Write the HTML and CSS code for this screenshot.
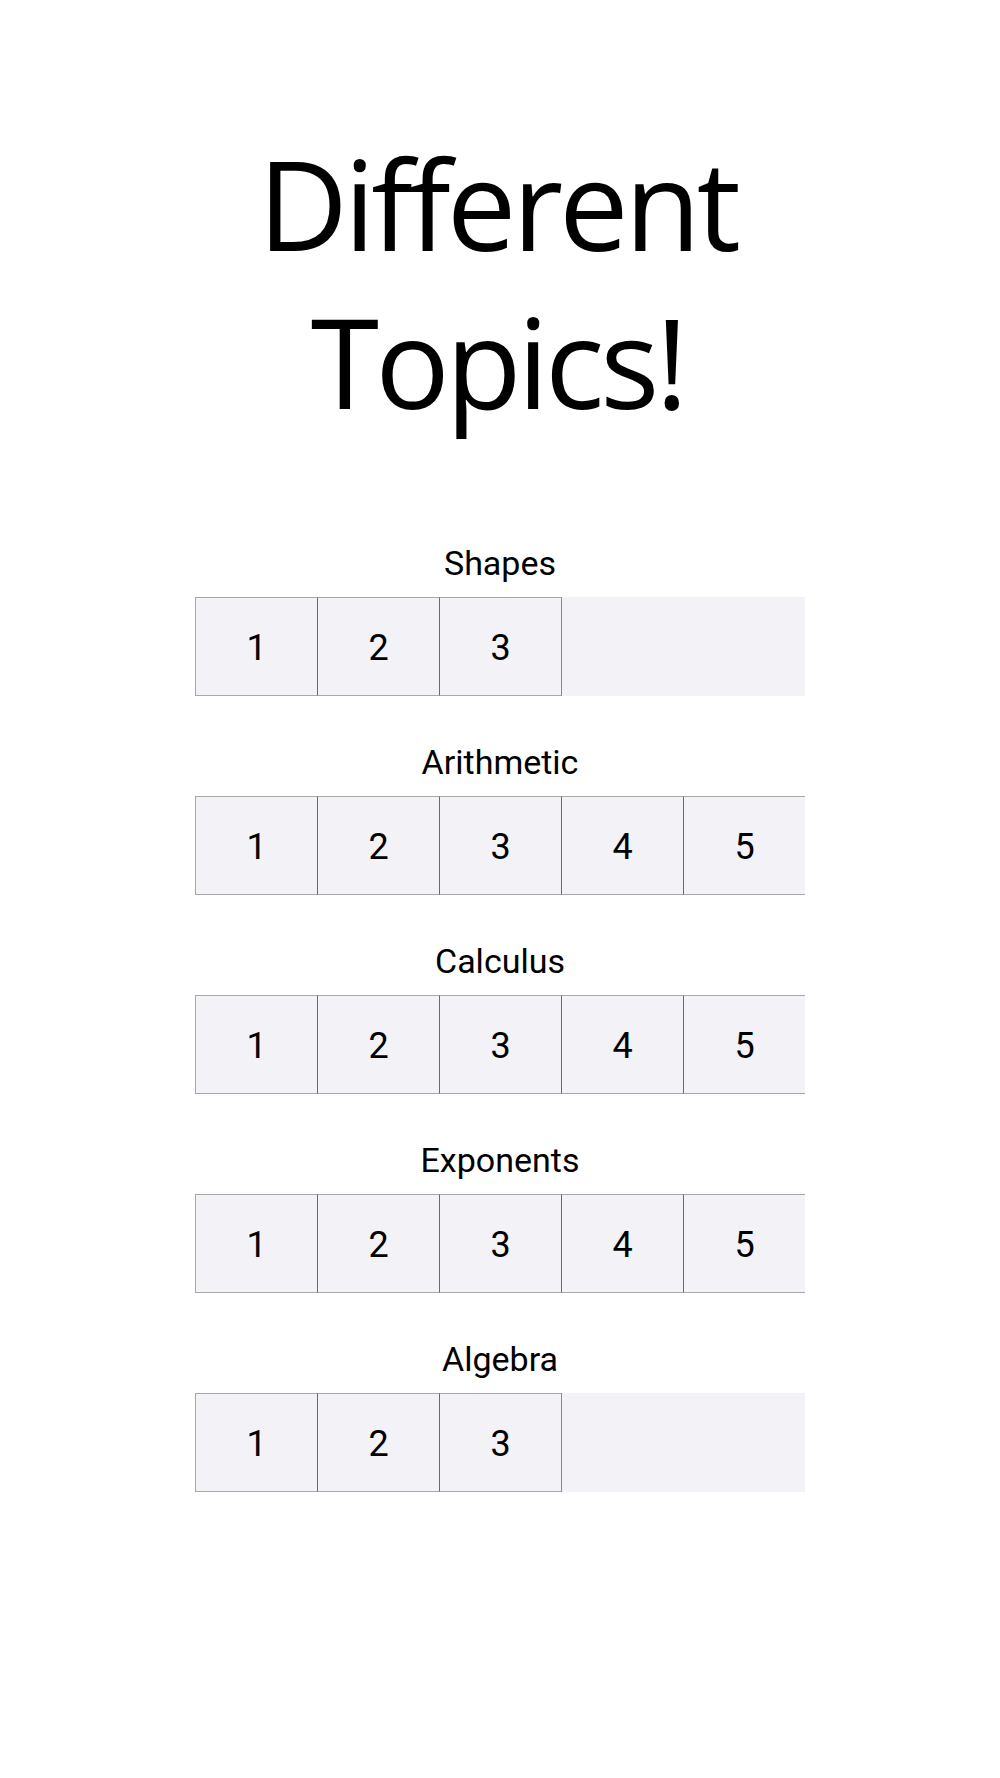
FILE: index.html
```html
<!DOCTYPE html>
<html lang="en">
<head>
<meta charset="utf-8">
<title>Different Topics!</title>
<link rel="stylesheet" href="styles.css">
</head>
<body>
<main class="page">
  <h1 class="title"><span class="title-line">Different</span><span class="title-line">Topics!</span></h1>
  <section class="topic">
    <h2 class="topic-name">Shapes</h2>
    <div class="strip"><div class="cell">1</div><div class="cell">2</div><div class="cell">3</div></div>
  </section>
  <section class="topic">
    <h2 class="topic-name">Arithmetic</h2>
    <div class="strip"><div class="cell">1</div><div class="cell">2</div><div class="cell">3</div><div class="cell">4</div><div class="cell">5</div></div>
  </section>
  <section class="topic">
    <h2 class="topic-name">Calculus</h2>
    <div class="strip"><div class="cell">1</div><div class="cell">2</div><div class="cell">3</div><div class="cell">4</div><div class="cell">5</div></div>
  </section>
  <section class="topic">
    <h2 class="topic-name">Exponents</h2>
    <div class="strip"><div class="cell">1</div><div class="cell">2</div><div class="cell">3</div><div class="cell">4</div><div class="cell">5</div></div>
  </section>
  <section class="topic">
    <h2 class="topic-name">Algebra</h2>
    <div class="strip"><div class="cell">1</div><div class="cell">2</div><div class="cell">3</div></div>
  </section>
</main>
</body>
</html>
```
FILE: styles.css
```css
html, body {
  margin: 0;
  padding: 0;
  background: #ffffff;
}
.page {
  width: 1000px;
  height: 1778px;
  display: flex;
  flex-direction: column;
  align-items: center;
  font-family: Roboto, "Liberation Sans", sans-serif;
  color: #000;
}
.title {
  margin: 124px 0 0;
  display: flex;
  flex-direction: column;
  align-items: center;
  font-family: "Open Sans", "Liberation Sans", sans-serif;
  font-weight: 400;
  font-size: 124px;
  line-height: 158px;
  text-align: center;
}
.title-line {
  display: block;
  letter-spacing: -4px;
  margin-right: 5px;
}
.topic {
  display: flex;
  flex-direction: column;
  align-items: center;
  gap: 14px;
  margin-top: 46px;
}
.title + .topic {
  margin-top: 103px;
}
.topic-name {
  margin: 0;
  font-weight: 400;
  font-size: 34px;
  line-height: 40px;
}
.strip {
  display: flex;
  width: 610px;
  height: 99px;
  overflow: hidden;
  background: #f2f2f7;
}
.cell {
  flex: 0 0 122px;
  box-sizing: border-box;
  display: flex;
  align-items: center;
  justify-content: center;
  padding-top: 2px;
  font-size: 36px;
  border-top: 1px solid #a8a8a8;
  border-bottom: 1px solid #a8a8a8;
  border-left: 1px solid #6a6a6a;
}
.cell:first-child {
  border-left-color: #a8a8a8;
}
.cell:last-child {
  flex-basis: 123px;
  border-right: 1px solid #8a8a8a;
}
```
